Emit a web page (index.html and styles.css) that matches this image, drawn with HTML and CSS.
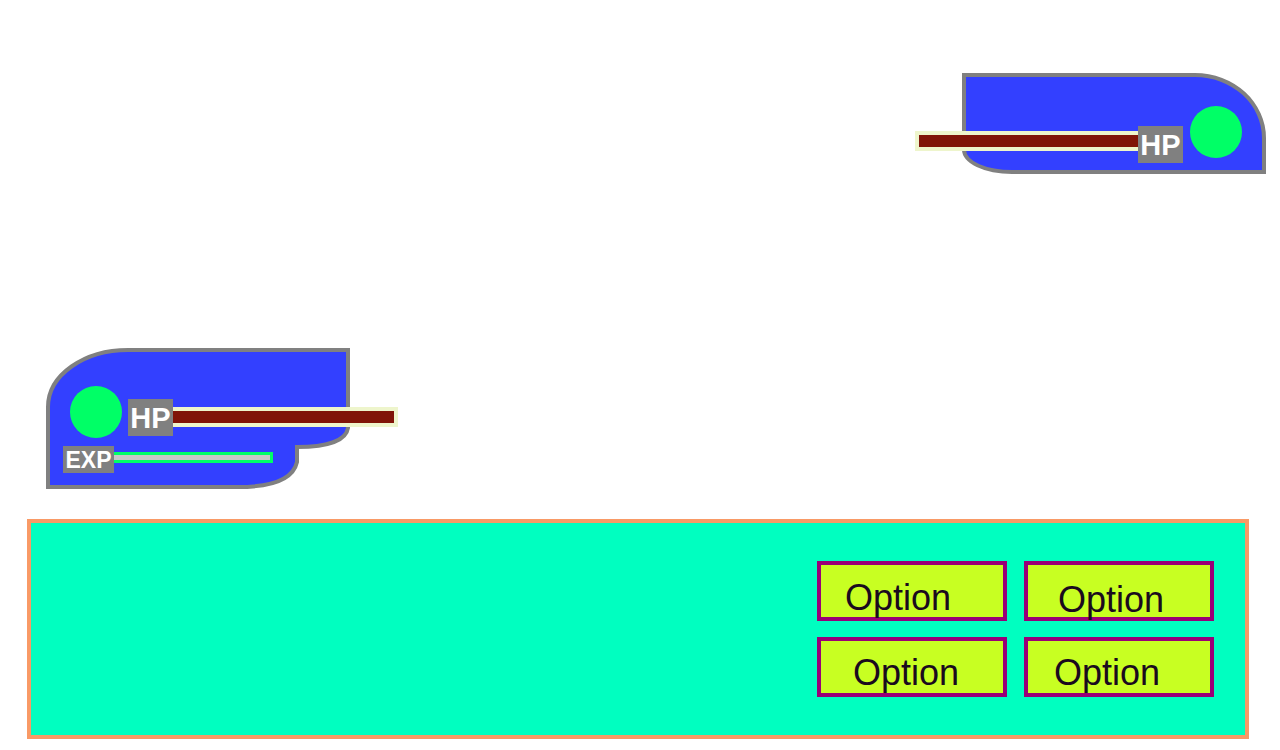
FILE: index.html
```html
<!DOCTYPE html>
<html lang="en">
<head>
    <meta charset="UTF-8">
    <meta name="viewport" content="width=device-width, initial-scale=1.0">
    <title>Battle</title>
    <link rel="stylesheet" href="styles.css">
</head>
<body>
    <!-- enemy status -->
    <div class="enemy">
        <div class="hpbar hpbar-left"></div>
        <div class="tag tag-hp">HP</div>
        <div class="ball ball-enemy"></div>
    </div>

    <!-- player status -->
    <div class="player">
        <svg class="player-bg" width="304" height="141" viewBox="0 0 304 141">
            <path d="M 2 139 L 2 59 C 2 27, 38 2, 82 2 L 302 2 L 302 80 C 300 93, 280 99, 251 99 L 251 114 C 247 132, 226 139, 192 139 Z"
                  fill="#3340ff" stroke="#808080" stroke-width="4"/>
        </svg>
        <div class="player-body">
            <div class="row">
                <div class="ball ball-player"></div>
                <div class="tag tag-hp tag-player">HP</div>
                <div class="hpbar hpbar-right"></div>
            </div>
            <div class="row row-exp">
                <div class="tag tag-exp">EXP</div>
                <div class="expbar"></div>
            </div>
        </div>
    </div>

    <!-- menu -->
    <div class="panel">
        <div class="options">
            <div class="option opt-1">Option</div>
            <div class="option opt-2">Option</div>
            <div class="option opt-3">Option</div>
            <div class="option opt-4">Option</div>
        </div>
    </div>
</body>
</html>
```

FILE: styles.css
```css
*{
    box-sizing: border-box;
}
body{
    margin: 0;
    font-family: "Liberation Sans", Arial, sans-serif;
    background: #fff;
}
.enemy{
    display: flex;
    align-items: flex-start;
    width: 304px;
    height: 101px;
    margin: 73px 14px 0 auto;
    background: #3340ff;
    border: 4px solid #808080;
    border-top-right-radius: 71px 65px;
    border-bottom-left-radius: 50px 24px;
}
.enemy > div, .row > div{
    flex-shrink: 0;
}
.hpbar{
    height: 20px;
    background: #801408;
    border: 4px solid #eef5cc;
}
.hpbar-left{
    width: 223px;
    margin: 54px 0 0 -51px;
    border-right: none;
}
.hpbar-right{
    width: 225px;
    margin-top: 59px;
    border-left: none;
}
.tag{
    background: #808080;
    color: #fff;
    font-weight: bold;
    text-align: center;
}
.tag-hp{
    width: 45px;
    height: 37px;
    line-height: 38px;
    font-size: 29px;
    margin-top: 49px;
}
.tag-player{
    margin: 51px 0 0 6px;
}
.ball{
    width: 52px;
    height: 52px;
    border-radius: 50%;
    background: #00ff66;
}
.ball-enemy{
    margin: 29px 0 0 7px;
}
.ball-player{
    margin: 38px 0 0 24px;
}
.player{
    position: relative;
    width: 304px;
    height: 141px;
    margin: 174px 0 0 46px;
}
.player-bg{
    position: absolute;
    top: 0;
    left: 0;
}
.player-body{
    position: relative;
}
.row{
    display: flex;
    align-items: flex-start;
}
.row-exp{
    margin-top: 8px;
    padding-left: 17px;
}
.tag-exp{
    width: 51px;
    height: 27px;
    line-height: 28px;
    font-size: 23px;
}
.expbar{
    width: 159px;
    height: 11px;
    margin-top: 6px;
    background: #c8c8c8;
    border: 3px solid #00ff66;
    border-left: none;
}
.panel{
    display: flex;
    align-items: center;
    justify-content: flex-end;
    height: 220px;
    margin: 30px 31px 0 27px;
    padding-right: 31px;
    background: #00ffc0;
    border: 4px solid #f99a66;
}
.options{
    display: grid;
    grid-template-columns: 190px 190px;
    column-gap: 17px;
    row-gap: 16px;
}
.option{
    height: 60px;
    background: #c8ff22;
    border: 4px solid #990077;
    color: #1a0a1e;
    font-size: 36px;
}
.opt-1{ padding: 12px 0 0 24px; }
.opt-2{ padding: 14px 0 0 30px; }
.opt-3{ padding: 11px 0 0 32px; }
.opt-4{ padding: 11px 0 0 26px; }
```
